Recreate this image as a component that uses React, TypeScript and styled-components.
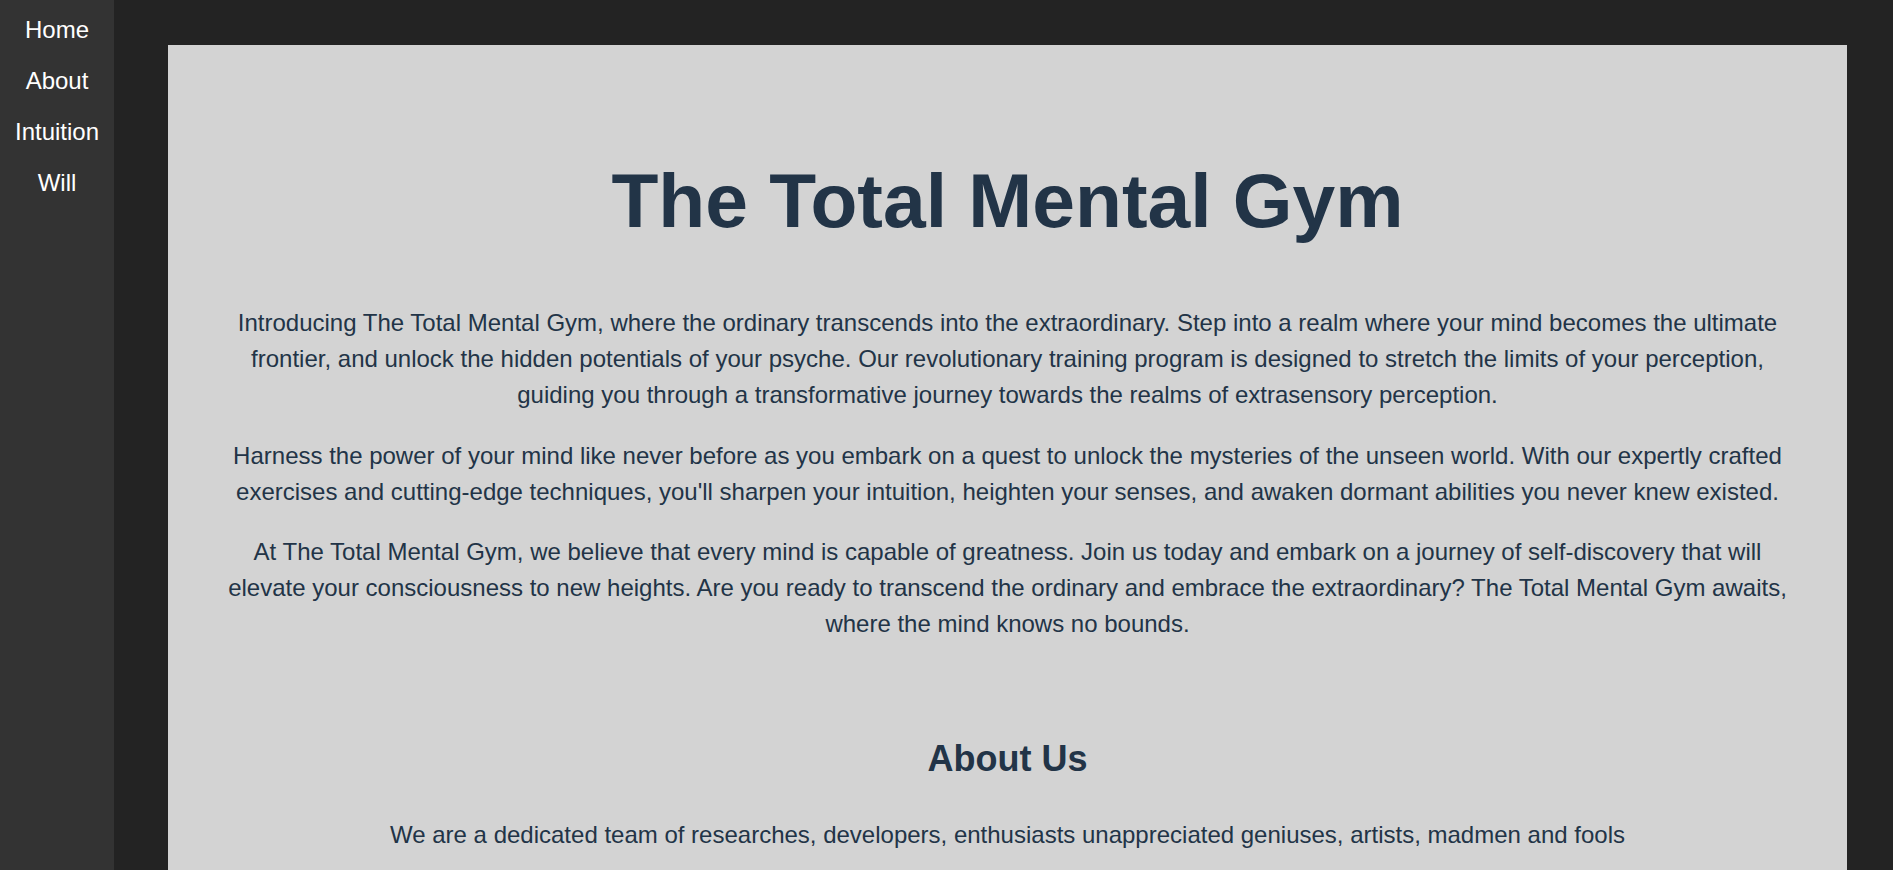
import React from "react";
import styled, { createGlobalStyle } from "styled-components";

const Global = createGlobalStyle`
  html, body { margin: 0; padding: 0; background: #232323; }
  body { font-family: "Liberation Sans", Arial, sans-serif; }
  * { box-sizing: border-box; }
`;

const Layout = styled.div`
  display: grid;
  grid-template-columns: 114px 1fr;
  min-height: 100vh;
  background: #232323;
`;

const Sidebar = styled.nav`
  background: #333333;
  display: flex;
  flex-direction: column;
  padding-top: 4px;
`;

const NavLink = styled.a`
  display: block;
  text-align: center;
  color: #ffffff;
  font-size: 24px;
  line-height: 27px;
  padding: 12px 0;
  text-decoration: none;
  cursor: pointer;
`;

const Main = styled.main`
  padding: 45px 46px 0 54px;
`;

const Panel = styled.div`
  background: #d3d3d3;
  padding: 60px 60px 40px;
  color: #223447;
  text-align: center;
`;

const Title = styled.h1`
  font-size: 76.8px;
  font-weight: 700;
  line-height: 88px;
  margin: 51px 0 61px;
`;

const Paragraph = styled.p`
  font-size: 24px;
  line-height: 36px;
  margin: 0 0 24.5px;
`;

const Section = styled.section<{ $top: number }>`
  margin-top: ${(p) => p.$top}px;
`;

const SubTitle = styled.h2`
  font-size: 36px;
  font-weight: 700;
  line-height: 41px;
  margin: 0 0 38px;
`;

export default function App() {
  return (
    <>
      <Global />
      <Layout>
        <Sidebar>
          <NavLink>Home</NavLink>
          <NavLink>About</NavLink>
          <NavLink>Intuition</NavLink>
          <NavLink>Will</NavLink>
        </Sidebar>
        <Main>
          <Panel>
            <Title>The Total Mental Gym</Title>
            <Paragraph>
              Introducing The Total Mental Gym, where the ordinary transcends into the extraordinary. Step into a realm where your mind becomes the ultimate frontier, and unlock the hidden potentials of your psyche. Our revolutionary training program is designed to stretch the limits of your perception, guiding you through a transformative journey towards the realms of extrasensory perception.
            </Paragraph>
            <Paragraph>
              Harness the power of your mind like never before as you embark on a quest to unlock the mysteries of the unseen world. With our expertly crafted exercises and cutting-edge techniques, you'll sharpen your intuition, heighten your senses, and awaken dormant abilities you never knew existed.
            </Paragraph>
            <Paragraph>
              At The Total Mental Gym, we believe that every mind is capable of greatness. Join us today and embark on a journey of self-discovery that will elevate your consciousness to new heights. Are you ready to transcend the ordinary and embrace the extraordinary? The Total Mental Gym awaits, where the mind knows no bounds.
            </Paragraph>
            <Section $top={95.5}>
              <SubTitle>About Us</SubTitle>
              <Paragraph>
                We are a dedicated team of researches, developers, enthusiasts unappreciated geniuses, artists, madmen and fools
              </Paragraph>
            </Section>
          </Panel>
        </Main>
      </Layout>
    </>
  );
}
